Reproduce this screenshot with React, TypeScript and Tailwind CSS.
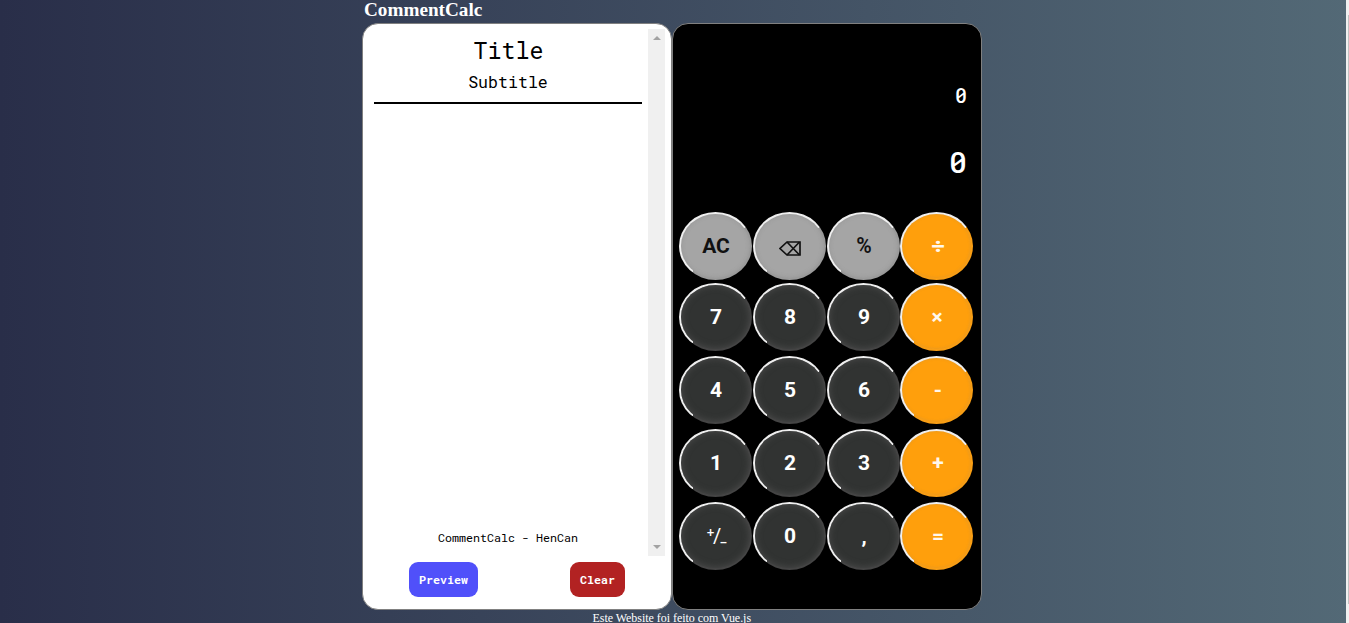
const rows = [
  { keys: ['AC', '⌫', '%', '÷'], pad: 'pb-[3px]' },
  { keys: ['7', '8', '9', '×'], pad: 'pb-[5px]' },
  { keys: ['4', '5', '6', '-'], pad: 'pb-[5px]' },
  { keys: ['1', '2', '3', '+'], pad: 'pb-[5px]' },
  { keys: ['⁺/₋', '0', ',', '='], pad: '' },
];

function Label({ label }: { label: string }) {
  switch (label) {
    case '⌫':
      return (
        <svg className="mx-auto mt-[5px]" width="22" height="15" viewBox="0 0 22 15" fill="none" stroke="#111" strokeWidth="1.7">
          <path d="M8 1H21V14H8L1 7.5Z" />
          <path d="M8 1L20.5 14M20.5 1L8 14" />
        </svg>
      );
    case '⁺/₋':
      return <span className="text-[20px] font-normal tracking-[-1.5px]">{label}</span>;
    case '%':
      return <span className="inline-block scale-y-105 font-semibold">{label}</span>;
    case '÷':
      return <span className="inline-block scale-x-110 pl-px font-black">{label}</span>;
    case '+':
    case '=':
      return <span className="inline-block pl-[2px] font-bold">{label}</span>;
    case '-':
      return <span className="inline-block pl-[2px]">{label}</span>;
    default:
      return <>{label}</>;
  }
}

function Key({ label, row, col }: { label: string; row: number; col: number }) {
  const tone =
    col === 3
      ? '[background:linear-gradient(#ff9f0c,#ff9f0c)_padding-box,conic-gradient(from_222deg,#efefef_196deg,#f99e14_196deg)_border-box] text-[#fff8ee] shadow-[inset_0_0_3px_rgba(130,130,130,0.25)]'
      : row === 0
        ? '[background:linear-gradient(#a5a5a5,#a5a5a5)_padding-box,conic-gradient(from_222deg,#efefef_196deg,#9a9a9a_196deg)_border-box] text-[#111] shadow-[inset_0_0_4px_rgba(120,120,120,0.3)]'
        : '[background:linear-gradient(#313332,#313332)_padding-box,conic-gradient(from_222deg,#efefef_196deg,#444444_196deg)_border-box] text-white shadow-[inset_0_0_7px_#4c4c4c]';
  return (
    <button
      className={`h-[68px] w-[73px] rounded-[50%] border-2 border-transparent pb-px pl-px font-[Roboto,'DejaVu_Sans',sans-serif] text-[21px] leading-6 font-bold ${tone}`}
    >
      <Label label={label} />
    </button>
  );
}

export default function App() {
  return (
    <div className="flex h-[623px] w-full overflow-hidden bg-[linear-gradient(to_right,#292e49,#536976)]">
      <div className="flex min-w-0 flex-1 flex-col pl-[362px]">
        <h1 className="h-[23px] shrink-0 pl-[2px] font-['Liberation_Serif',serif] text-[19.2px] leading-[20px] font-bold text-white">
          CommentCalc
        </h1>
        <div className="flex shrink-0">
          <section className="flex h-[587px] w-[310px] flex-col rounded-[16px] border border-[#808080] bg-white font-['Roboto_Mono','DejaVu_Sans_Mono',monospace] text-black">
            <div className="mt-[5px] ml-[11px] flex h-[527px] w-[291px]">
              <div className="flex w-[268px] flex-col text-center">
                <div className="mt-[5px] h-8 pl-px text-[23.3px] leading-8">Title</div>
                <div className="mt-[4px] h-6 text-[16.6px] leading-6">Subtitle</div>
                <div className="mt-[8px] border-t-2 border-black" />
                <div className="mt-auto mb-[10px] text-[11.67px] leading-4">CommentCalc - HenCan</div>
              </div>
              <div className="ml-[6px] flex w-[17px] flex-col items-center justify-between bg-[#f0f0f0] py-[7px]">
                <svg width="8" height="4" viewBox="0 0 8 4"><path d="M0 4L4 0L8 4Z" fill="#a3a3a3" /></svg>
                <svg width="8" height="4" viewBox="0 0 8 4"><path d="M0 0L4 4L8 0Z" fill="#a3a3a3" /></svg>
              </div>
            </div>
            <div className="mt-[6px] ml-[46px] flex w-[216px] justify-between text-[11.67px] font-bold text-white">
              <button className="h-[35px] w-[69px] rounded-[9px] bg-[#5050fa]">Preview</button>
              <button className="h-[35px] w-[55px] rounded-[9px] bg-[#b22222]">Clear</button>
            </div>
          </section>
          <section className="h-[587px] w-[310px] rounded-[16px] border border-[#808080] bg-black pl-[6px] text-white">
            <div className="flex h-[188px] flex-col items-end pr-[14px] font-['Roboto_Mono','DejaVu_Sans_Mono',monospace] font-medium">
              <div className="mt-[57px] text-[20px] leading-7">0</div>
              <div className="mt-[33px] text-[30px] leading-10">0</div>
            </div>
            {rows.map(({ keys, pad }, row) => (
              <div key={row} className={`grid grid-cols-[74px_74px_73px_73px] ${pad}`}>
                {keys.map((label, col) => (
                  <Key key={label} label={label} row={row} col={col} />
                ))}
              </div>
            ))}
          </section>
        </div>
        <footer className="ml-[230px] shrink-0 pl-[0.5px] font-['Liberation_Serif',serif] text-[12px] leading-4 tracking-[-0.04px] text-white">
          Este Website foi feito com Vue.js
        </footer>
      </div>
      <div className="flex w-[3px] justify-end bg-[#f1f1f1]">
        <div className="mt-[15px] h-[589px] w-[1px] bg-[#c1c1c1]" />
      </div>
    </div>
  );
}
